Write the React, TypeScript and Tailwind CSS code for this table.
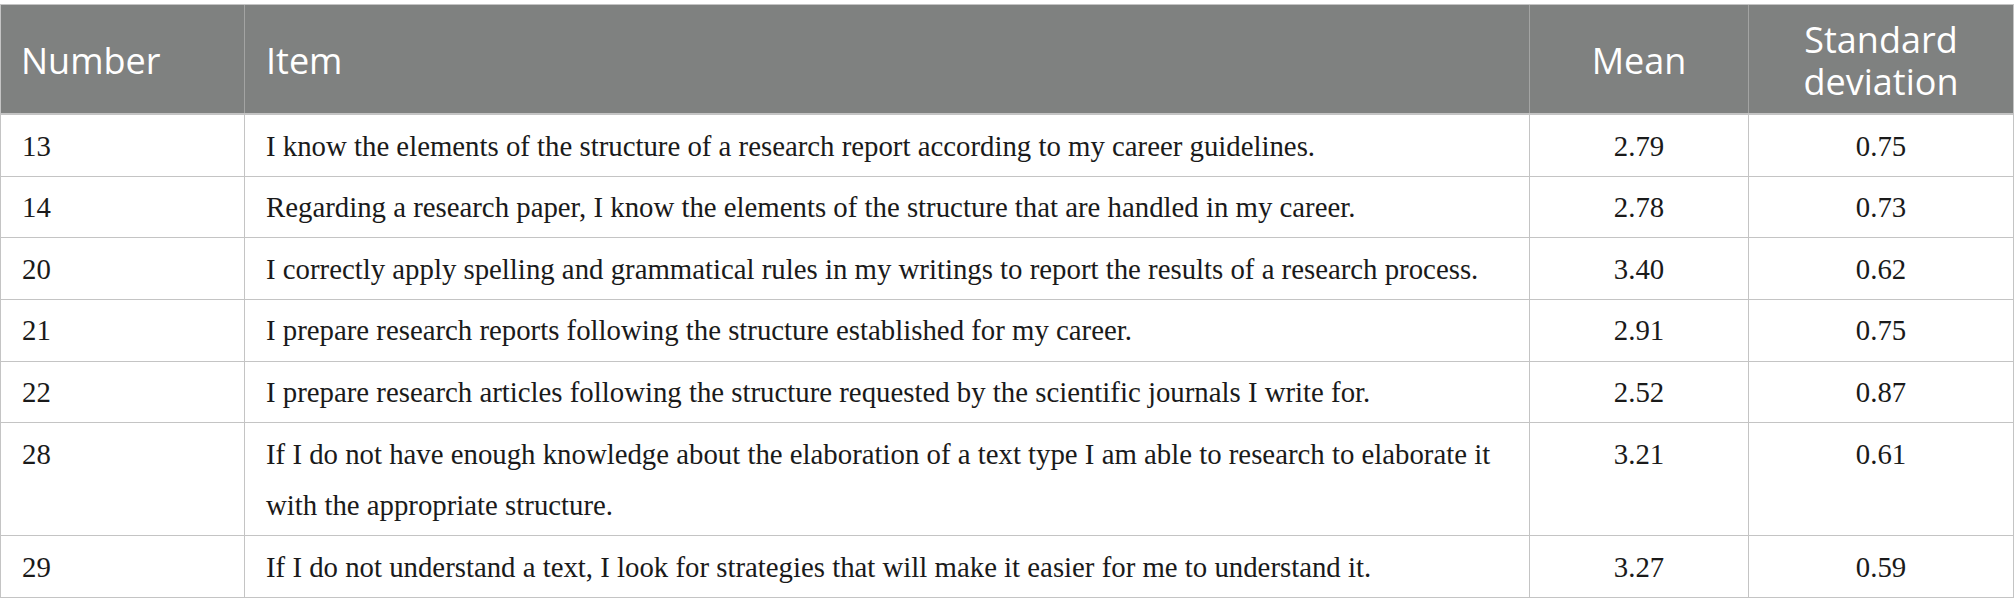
import React from "react";

const rows: { n: string; item: string; mean: string; sd: string }[] = [
  { n: "13", item: "I know the elements of the structure of a research report according to my career guidelines.", mean: "2.79", sd: "0.75" },
  { n: "14", item: "Regarding a research paper, I know the elements of the structure that are handled in my career.", mean: "2.78", sd: "0.73" },
  { n: "20", item: "I correctly apply spelling and grammatical rules in my writings to report the results of a research process.", mean: "3.40", sd: "0.62" },
  { n: "21", item: "I prepare research reports following the structure established for my career.", mean: "2.91", sd: "0.75" },
  { n: "22", item: "I prepare research articles following the structure requested by the scientific journals I write for.", mean: "2.52", sd: "0.87" },
  { n: "28", item: "If I do not have enough knowledge about the elaboration of a text type I am able to research to elaborate it with the appropriate structure.", mean: "3.21", sd: "0.61" },
  { n: "29", item: "If I do not understand a text, I look for strategies that will make it easier for me to understand it.", mean: "3.27", sd: "0.59" },
];

const sans = { fontFamily: '"Open Sans", "Noto Sans", sans-serif' };
const serif = { fontFamily: '"Liberation Serif", "Times New Roman", serif' };

export default function App() {
  return (
    <div className="w-[2014px] h-[615px] bg-white pt-[4px]">
      <div className="border-l border-t border-[#c4c4c4] w-[2014px]">
        <div
          className="flex h-[110px] bg-[#7f8180] text-white text-[36px] leading-[42px] border-b-2 border-[#c4c4c4]"
          style={sans}
        >
          <div className="w-[244px] flex items-center px-[20px] pt-[3px] border-r border-[#a3a4a3]">Number</div>
          <div className="w-[1285px] flex items-center px-[21px] pt-[3px] border-r border-[#a3a4a3]">Item</div>
          <div className="w-[219px] flex items-center justify-center text-center pt-[3px] border-r border-[#a3a4a3]">Mean</div>
          <div className="w-[265px] flex items-center justify-center text-center pt-[4px] border-r border-[#c4c4c4]">
            Standard
            <br />
            deviation
          </div>
        </div>
        {rows.map((r) => (
          <div
            key={r.n}
            className="flex border-b border-[#c4c4c4] text-[28.8px] leading-[51.33px] text-[#1a1a1a]"
            style={serif}
          >
            <div className="w-[244px] shrink-0 px-[21px] pt-[5.5px] pb-[3.84px] border-r border-[#c4c4c4]">{r.n}</div>
            <div className="w-[1285px] shrink-0 px-[21px] pt-[5.5px] pb-[3.84px] border-r border-[#c4c4c4]">{r.item}</div>
            <div className="w-[219px] shrink-0 text-center pt-[5.5px] pb-[3.84px] border-r border-[#c4c4c4]">{r.mean}</div>
            <div className="w-[265px] shrink-0 text-center pt-[5.5px] pb-[3.84px] border-r border-[#c4c4c4]">{r.sd}</div>
          </div>
        ))}
      </div>
    </div>
  );
}
